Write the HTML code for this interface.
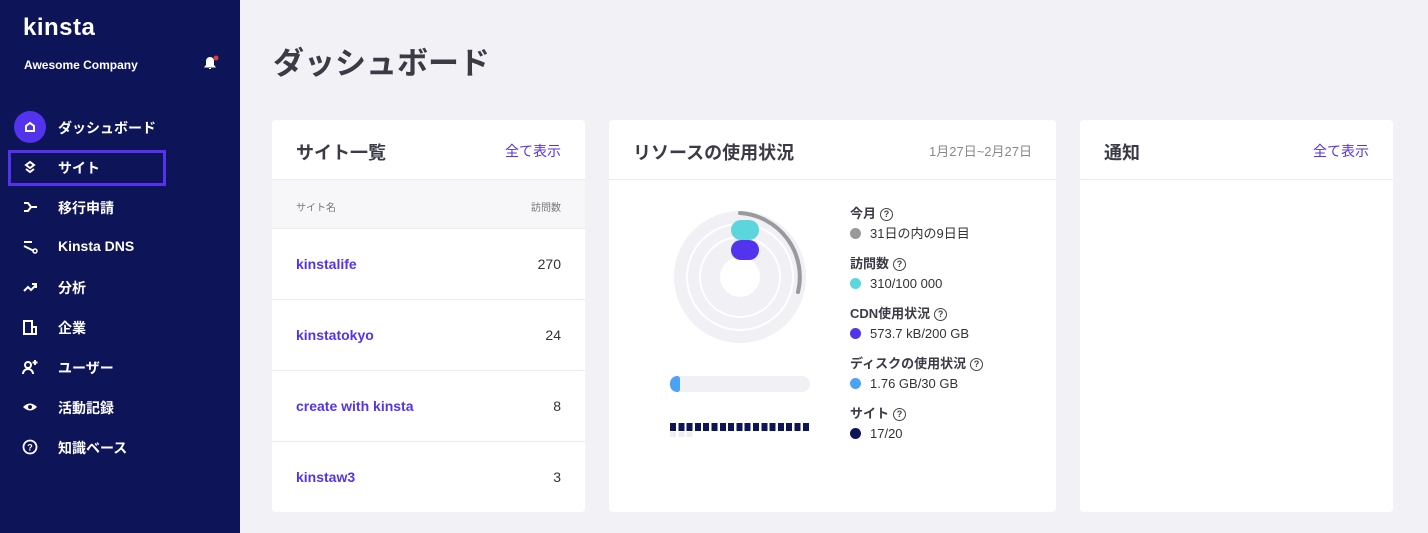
<!DOCTYPE html>
<html><head><meta charset="utf-8"><style>
*{margin:0;padding:0;box-sizing:border-box}
body{width:1428px;height:533px;overflow:hidden;background:#f2f2f6;font-family:"Liberation Sans","Noto Sans CJK JP",sans-serif;position:relative}
.sb{position:absolute;left:0;top:0;width:240px;height:533px;background:#0d1458;color:#fff}
.abs{position:absolute}
.nav{position:absolute;left:0;width:240px;height:40px;font-size:14px;font-weight:bold;color:#fff}
.nav span{position:absolute;left:58px;top:11px}
.nav svg{position:absolute;left:22px;top:12px}
.card{position:absolute;top:120px;height:392px;background:#fff;border-radius:4px}
.ch{position:absolute;left:0;right:0;top:0;height:60px;border-bottom:1px solid #ececf0}
.ct{position:absolute;left:24px;top:19px;font-size:18px;font-weight:bold;color:#3b3b46}
.cl{position:absolute;right:24px;top:21px;font-size:14px;color:#5333ed}
.row{position:absolute;left:0;right:0;height:71px;border-bottom:1px solid #ececf0;font-size:14px}
.row .n{position:absolute;left:24px;top:27px;color:#5333ed;font-weight:bold}
.row .v{position:absolute;right:24px;top:27px;color:#333}
.lg{position:absolute;left:850px;font-size:13px;color:#333;line-height:20px}
.lg b{display:block;font-weight:bold;color:#3b3b46}
.q{display:inline-block;width:13px;height:13px;border:1.5px solid #444;border-radius:50%;font-size:9px;text-align:center;line-height:10px;vertical-align:1px;margin-left:4px;font-weight:bold}
.dot{display:inline-block;width:11px;height:11px;border-radius:50%;margin-right:9px;vertical-align:-1px}
</style></head><body>
<div class="sb">
 <div class="abs" style="left:23px;top:14px;font-size:24px;font-weight:bold;letter-spacing:0.5px">kinsta</div>
 <div class="abs" style="left:24px;top:58px;font-size:12px;font-weight:bold">Awesome Company</div>
 <svg class="abs" style="left:202px;top:55px" width="18" height="16"><path d="M3 12 h10 l-1.5-2 v-4 a3.5 3.5 0 0 0 -7 0 v4z M7 13.5 h2" fill="#fff" stroke="#fff"/><circle cx="14" cy="3" r="2.5" fill="#e03b3b"/></svg>
 <div class="abs" style="left:14px;top:111px;width:32px;height:32px;border-radius:50%;background:#5333ed"></div>
 <div class="nav" style="top:107px"><svg width="16" height="16"><path d="M4 12 V7 l4-3 4 3 v5z" fill="none" stroke="#fff" stroke-width="2"/></svg><span>ダッシュボード</span></div>
 <div class="abs" style="left:8px;top:150px;width:158px;height:36px;border:3px solid #5333ed"></div>
 <div class="nav" style="top:147px"><svg width="16" height="16"><path d="M4 6 l4-3 4 3 -4 3z M4 10 l4 3 4-3" fill="none" stroke="#fff" stroke-width="2"/></svg><span>サイト</span></div>
 <div class="nav" style="top:187px"><svg width="16" height="16"><path d="M2 4 h4 l3 4 h6 M2 12 h4 l3-4" fill="none" stroke="#fff" stroke-width="2"/></svg><span>移行申請</span></div>
 <div class="nav" style="top:227px"><svg width="16" height="16"><path d="M2 3 h8 M2 7 l10 5" fill="none" stroke="#fff" stroke-width="2"/><circle cx="13" cy="12" r="2" fill="none" stroke="#fff" stroke-width="1.5"/></svg><span>Kinsta DNS</span></div>
 <div class="nav" style="top:267px"><svg width="16" height="16"><path d="M2 12 l4-4 3 3 5-5 M10 5 h4 v4" fill="none" stroke="#fff" stroke-width="2"/></svg><span>分析</span></div>
 <div class="nav" style="top:307px"><svg width="16" height="16"><path d="M2 15 V2 h8 v13 z M10 8 h4 v7 h-4" fill="none" stroke="#fff" stroke-width="2"/></svg><span>企業</span></div>
 <div class="nav" style="top:347px"><svg width="16" height="16"><circle cx="6" cy="6" r="3" fill="none" stroke="#fff" stroke-width="2"/><path d="M1 15 a5 5 0 0 1 10 0 M13 1 v5 M10.5 3.5 h5" fill="none" stroke="#fff" stroke-width="2"/></svg><span>ユーザー</span></div>
 <div class="nav" style="top:387px"><svg width="16" height="16"><path d="M1 8 q7-7 14 0 q-7 7 -14 0z" fill="#fff"/><circle cx="8" cy="8" r="2" fill="#0d1458"/></svg><span>活動記録</span></div>
 <div class="nav" style="top:427px"><svg width="16" height="16"><circle cx="8" cy="8" r="6.5" fill="none" stroke="#fff" stroke-width="1.8"/><text x="8" y="11.5" font-size="9" font-weight="bold" fill="#fff" text-anchor="middle" font-family="Liberation Sans">?</text></svg><span>知識ベース</span></div>
</div>
<div class="abs" style="left:273px;top:38px;font-size:31px;font-weight:bold;color:#3b3b46">ダッシュボード</div>

<div class="card" style="left:272px;width:313px">
 <div class="ch"><div class="ct">サイト一覧</div><div class="cl">全て表示</div></div>
 <div class="abs" style="left:0;right:0;top:60px;height:49px;background:#f7f7f9;border-bottom:1px solid #ececf0;font-size:10px;color:#777"><span class="abs" style="left:24px;top:19px">サイト名</span><span class="abs" style="right:24px;top:19px">訪問数</span></div>
 <div class="row" style="top:109px"><span class="n">kinstalife</span><span class="v">270</span></div>
 <div class="row" style="top:180px"><span class="n">kinstatokyo</span><span class="v">24</span></div>
 <div class="row" style="top:251px"><span class="n">create with kinsta</span><span class="v">8</span></div>
 <div class="row" style="top:322px;border:none"><span class="n">kinstaw3</span><span class="v">3</span></div>
</div>

<div class="card" style="left:609px;width:447px">
 <div class="ch"><div class="ct">リソースの使用状況</div><div class="cl" style="color:#888;font-size:13px">1月27日~2月27日</div></div>
</div>
<svg class="abs" style="left:670px;top:205px" width="140" height="145">
 <circle cx="70" cy="72" r="66" fill="#f0f0f5"/>
 <circle cx="70" cy="72" r="40" fill="none" stroke="#fff" stroke-width="2"/>
 <circle cx="70" cy="72" r="53" fill="none" stroke="#fff" stroke-width="2"/>
 <circle cx="70" cy="72" r="20" fill="#fff"/>
 <path d="M70 8 A64 64 0 0 1 128 87" fill="none" stroke="#9a9a9e" stroke-width="4" stroke-linecap="round"/>
 <rect x="61" y="15" width="28" height="20" rx="10" fill="#5bd6dc"/>
 <rect x="61" y="35" width="28" height="20" rx="10" fill="#5333ed"/>
</svg>
<div class="abs" style="left:670px;top:376px;width:140px;height:16px;border-radius:8px;background:#f0f0f5"></div>
<div class="abs" style="left:670px;top:376px;width:10px;height:16px;border-radius:8px 3px 3px 8px;background:#4aa3f5"></div>
<div class="abs" style="left:670px;top:423px;width:140px;height:8px;background:repeating-linear-gradient(90deg,#0d1458 0 6px,transparent 6px 8.3px)"></div>
<div class="abs" style="left:670px;top:432px;width:24px;height:5px;background:repeating-linear-gradient(90deg,#eee 0 6px,transparent 6px 8.3px)"></div>
<div class="lg" style="top:204px"><b>今月<span class="q">?</span></b><span class="dot" style="background:#999"></span>31日の内の9日目</div>
<div class="lg" style="top:254px"><b>訪問数<span class="q">?</span></b><span class="dot" style="background:#5bd6dc"></span>310/100 000</div>
<div class="lg" style="top:304px"><b>CDN使用状況<span class="q">?</span></b><span class="dot" style="background:#5333ed"></span>573.7 kB/200 GB</div>
<div class="lg" style="top:354px"><b>ディスクの使用状況<span class="q">?</span></b><span class="dot" style="background:#4aa3f5"></span>1.76 GB/30 GB</div>
<div class="lg" style="top:404px"><b>サイト<span class="q">?</span></b><span class="dot" style="background:#0d1458"></span>17/20</div>

<div class="card" style="left:1080px;width:313px">
 <div class="ch"><div class="ct">通知</div><div class="cl">全て表示</div></div>
</div>
</body></html>
